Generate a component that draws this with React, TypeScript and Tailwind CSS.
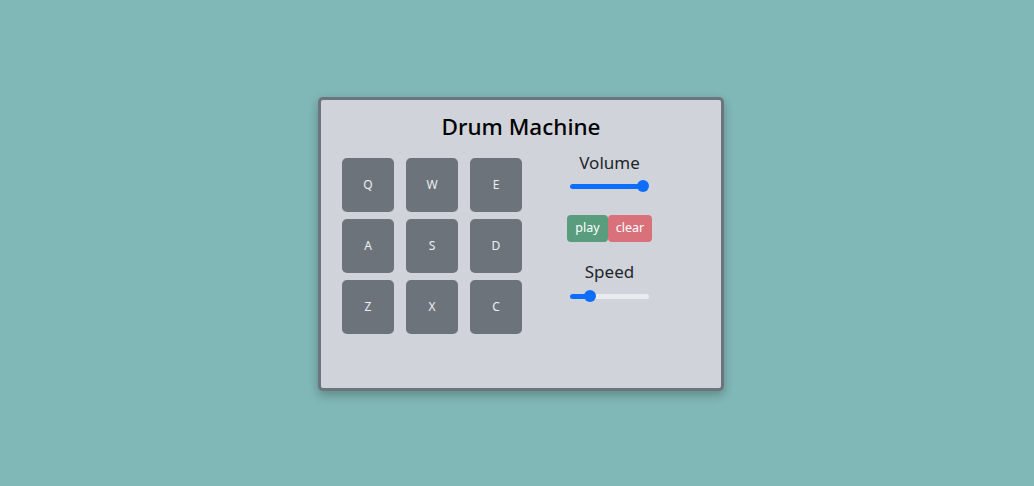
import React from "react";

const pads = ["Q", "W", "E", "A", "S", "D", "Z", "X", "C"];

function Slider({ pct }: { pct: number }) {
  return (
    <div className="relative h-[12px] w-[79px] flex items-center">
      <div className="h-[5px] w-full rounded-full bg-[#e9ecef]" />
      <div
        className="absolute left-0 h-[5px] rounded-full bg-[#0d6efd]"
        style={{ width: `${pct}%` }}
      />
      <div
        className="absolute h-[12px] w-[12px] rounded-full bg-[#0d6efd]"
        style={{ left: `calc(${pct}% - 6px)` }}
      />
    </div>
  );
}

export default function App() {
  return (
    <div
      className="w-[1034px] h-[486px] bg-[#80b7b7] flex justify-center pt-[97px] pl-[8px]"
      style={{ fontFamily: '"Noto Sans", "Open Sans", sans-serif' }}
    >
      <div className="w-[406px] h-[294px] border-[3px] border-[#6c757d] rounded-[5px] bg-[#d0d4da] shadow-[0_4px_10px_rgba(0,0,0,0.25)] flex flex-col">
        <h1 className="text-center text-[22.5px] leading-[32px] font-medium text-black mt-[11px]">
          Drum Machine
        </h1>
        <div className="flex mt-[15px] pl-[21px]">
          <div className="grid grid-cols-[52px_52px_52px] gap-x-3 gap-y-[7px]">
            {pads.map((p) => (
              <div
                key={p}
                className="h-[54px] rounded-[5px] bg-[#6c737b] flex items-center justify-center text-[12px] text-[#eef0f2]"
              >
                {p}
              </div>
            ))}
          </div>
          <div className="ml-[45px] w-[85px] flex flex-col items-center -mt-[6px]">
            <div className="text-[17px] leading-[22px] text-[#212529]">Volume</div>
            <div className="mt-[6px]">
              <Slider pct={93} />
            </div>
            <div className="flex mt-[23px]">
              <button className="h-[27px] w-[41px] rounded-[4px] bg-[#5a9c7e] text-white text-[12.5px] leading-none">
                play
              </button>
              <button className="h-[27px] w-[44px] rounded-[4px] bg-[#d9717b] text-white text-[12.5px] leading-none">
                clear
              </button>
            </div>
            <div className="mt-[19px] text-[17px] leading-[22px] text-[#212529]">Speed</div>
            <div className="mt-[7px]">
              <Slider pct={25} />
            </div>
          </div>
        </div>
      </div>
    </div>
  );
}
